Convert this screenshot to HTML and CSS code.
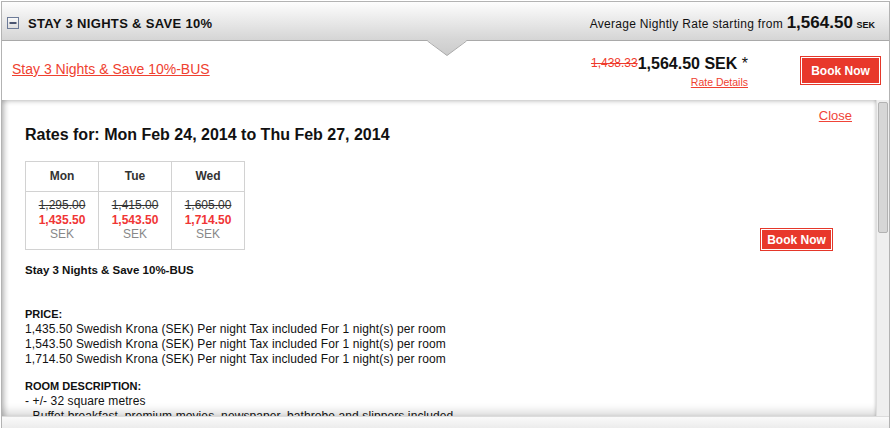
FILE: index.html
```html
<!DOCTYPE html>
<html>
<head>
<meta charset="utf-8">
<link rel="stylesheet" href="styles.css">
</head>
<body>
<div class="box">
  <div class="hdr">
    <div class="hdr-title"><svg class="toggle" width="12" height="12" viewBox="0 0 12 12"><defs><linearGradient id="tg" x1="0" y1="0" x2="0" y2="1"><stop offset="0" stop-color="#fafafa"/><stop offset="1" stop-color="#dcdcdc"/></linearGradient></defs><rect x="0.5" y="0.5" width="11" height="11" fill="url(#tg)" stroke="#6d7b98"/><rect x="2.5" y="5" width="7" height="2" fill="#4a5470"/></svg>STAY 3 NIGHTS &amp; SAVE 10%</div>
    <div class="hdr-right">Average Nightly Rate starting from <span class="big">1,564.50</span> <span class="cur">SEK</span></div>
  </div>
  <svg class="pointer" width="40" height="17" viewBox="0 0 40 17"><defs><linearGradient id="pg" x1="0" y1="0" x2="0" y2="1"><stop offset="0" stop-color="#d6d6d6"/><stop offset="1" stop-color="#cbcbcb"/></linearGradient></defs><polygon points="0,0 40,0 20,15.5" fill="url(#pg)"/><polyline points="0.5,1 20,15.5 39.5,1" fill="none" stroke="#a9a9a9" stroke-width="1"/></svg>
  <div class="offer">
    <a class="offer-link" href="#">Stay 3 Nights &amp; Save 10%-BUS</a>
    <div class="offer-price">
      <div class="price-line"><s class="was">1,438.33</s><span class="now">1,564.50 SEK <span class="ast">*</span></span></div>
      <a class="rate-details" href="#">Rate Details</a>
    </div>
    <button class="book">Book Now</button>
  </div>
  <div class="panel">
    <div class="panel-body">
      <div class="close-row"><a class="close" href="#">Close</a></div>
      <h2 class="rates-title">Rates for: Mon Feb 24, 2014 to Thu Feb 27, 2014</h2>
      <div class="rates-row">
        <div class="rates">
          <div class="cell head">Mon</div>
          <div class="cell head">Tue</div>
          <div class="cell head">Wed</div>
          <div class="cell"><s class="old">1,295.00</s><span class="red">1,435.50</span><span class="cur2">SEK</span></div>
          <div class="cell"><s class="old">1,415.00</s><span class="red">1,543.50</span><span class="cur2">SEK</span></div>
          <div class="cell"><s class="old">1,605.00</s><span class="red">1,714.50</span><span class="cur2">SEK</span></div>
        </div>
        <button class="book book-sm">Book Now</button>
      </div>
      <div class="rate-name">Stay 3 Nights &amp; Save 10%-BUS</div>
      <div class="section first">
        <div class="sec-h">PRICE:</div>
        <div>1,435.50 Swedish Krona (SEK) Per night Tax included For 1 night(s) per room</div>
        <div>1,543.50 Swedish Krona (SEK) Per night Tax included For 1 night(s) per room</div>
        <div>1,714.50 Swedish Krona (SEK) Per night Tax included For 1 night(s) per room</div>
      </div>
      <div class="section">
        <div class="sec-h">ROOM DESCRIPTION:</div>
        <div>- +/- 32 square metres</div>
        <div>- Buffet breakfast, premium movies, newspaper, bathrobe and slippers included</div>
      </div>
    </div>
    <div class="scrollbar"><div class="thumb"></div></div>
  </div>
  <div class="footer"></div>
</div>
</body>
</html>
```
FILE: styles.css
```css
html, body { margin: 0; padding: 0; background: #fff; }
body { font-family: "Liberation Sans", Arial, sans-serif; color: #111; }

.box {
  margin: 1px 0 0 1px;
  width: 889px;
  height: 427px;
  box-sizing: border-box;
  border: 1px solid #b3b3b3;
  border-bottom: none;
  position: relative;
  overflow: hidden;
  display: flex;
  flex-direction: column;
}

.hdr {
  flex: none;
  height: 39px;
  box-sizing: border-box;
  border-bottom: 1px solid #a9a9a9;
  background: linear-gradient(#fdfdfd, #d5d5d5);
  display: flex;
  align-items: baseline;
  justify-content: space-between;
  padding: 11px 14px 0 5px;
}
.hdr-title { font-size: 13px; font-weight: bold; line-height: 20px; color: #111; letter-spacing: 0.33px; }
.toggle { vertical-align: baseline; margin-right: 9px; margin-bottom: -1px; }
.hdr-right { font-size: 12px; line-height: 20px; color: #111; letter-spacing: 0.3px; }
.hdr-right .big { font-size: 17px; font-weight: bold; letter-spacing: 0; }
.hdr-right .cur { font-size: 9px; font-weight: bold; letter-spacing: 0; }

.pointer { position: absolute; left: 425px; top: 38px; }

.offer {
  flex: none;
  height: 59px;
  display: flex;
  align-items: flex-start;
  padding: 0 8px 0 10px;
}
.offer-link {
  margin-top: 20px;
  font-size: 14px;
  line-height: 16px;
  color: #ef4130;
  text-decoration: underline;
}
.offer-price { margin-left: auto; margin-right: 52px; margin-top: 14px; text-align: right; }
.price-line { line-height: 18px; white-space: nowrap; }
.was { font-size: 12px; color: #ef3a2c; vertical-align: top; line-height: 14px; position: relative; top: 1px; }
.now { font-size: 16px; font-weight: bold; color: #111; }
.ast { font-weight: normal; }
.rate-details { display: block; margin-top: 3px; font-size: 10.5px; line-height: 12px; color: #ef4130; }

.book {
  margin-top: 15px;
  width: 81px;
  height: 29px;
  box-sizing: border-box;
  border: 1px solid #e5372a;
  box-shadow: inset 0 0 0 1px #fff;
  background: #e8382b;
  color: #fff;
  font-family: "Liberation Sans", Arial, sans-serif;
  font-weight: bold;
  font-size: 12px;
  padding: 0;
  cursor: pointer;
}

.panel {
  flex: none;
  height: 316px;
  display: flex;
}
.panel-body {
  flex: 1;
  overflow: hidden;
  padding: 7.5px 24px 0 23px;
  box-shadow: inset 0 4px 4px -2px rgba(0,0,0,.17), inset 5px 0 5px -2px rgba(0,0,0,.22), inset 0 -10px 8px -5px rgba(0,0,0,.14), inset -3px 0 3px -2px rgba(0,0,0,.12);
  font-size: 12px;
  line-height: 15px;
}
.close-row { text-align: right; font-size: 13px; line-height: 15px; }
.close { color: #f04438; }
.rates-title { margin: 3.5px 0 17px; font-size: 16px; line-height: 18px; font-weight: bold; color: #111; }

.rates-row { display: flex; align-items: flex-end; justify-content: space-between; }
.rates {
  display: grid;
  grid-template-columns: repeat(3, 73px);
  border-top: 1px solid #d2d2d2;
  border-left: 1px solid #d2d2d2;
}
.cell {
  border-right: 1px solid #d2d2d2;
  border-bottom: 1px solid #d2d2d2;
  text-align: center;
  font-size: 12px;
  line-height: 14.5px;
  padding: 6px 0 7.5px;
  display: flex;
  flex-direction: column;
}
.cell.head { font-weight: bold; color: #333; line-height: 14px; padding: 7px 0 8px; }
.old { color: #333; }
.red { color: #f03535; font-weight: bold; }
.cur2 { color: #888; }
.book-sm { margin: 0 19px -1px 0; width: 73px; height: 23px; }

.rate-name { margin-top: 13.4px; font-weight: bold; font-size: 11.5px; }
.section.first { margin-top: 28.6px; }
.section { margin-top: 12.5px; white-space: nowrap; letter-spacing: 0.1px; }
.sec-h { font-weight: bold; font-size: 11px; letter-spacing: 0; }

.scrollbar {
  flex: none;
  width: 13px;
  box-sizing: border-box;
  background: #efefef;
  border-left: 1px solid #dedede;
  padding: 2px 1px 0 1px;
}
.thumb {
  height: 131px;
  box-sizing: border-box;
  background: #d6d6d6;
  border: 1px solid #b2b2b2;
  border-radius: 2px;
}

.footer {
  flex: 1;
  border-top: 1px solid #dcdcdc;
  background: linear-gradient(#fafafa, #ececec);
}
```
